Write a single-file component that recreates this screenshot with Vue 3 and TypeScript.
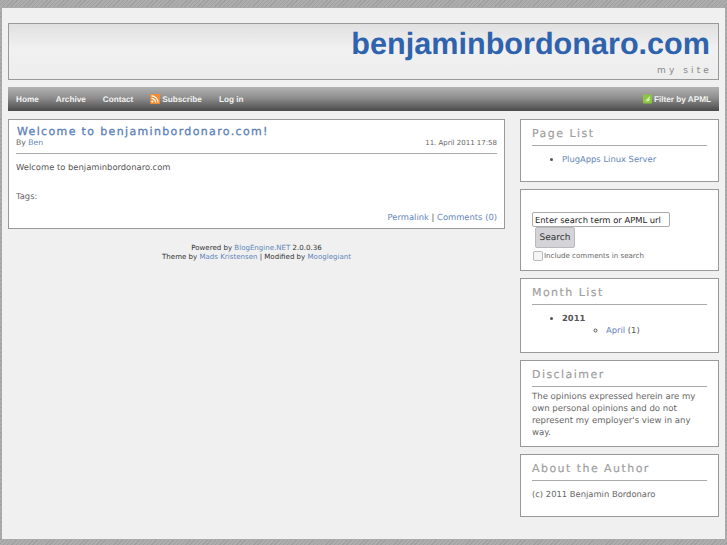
<script setup lang="ts">
const navLinks: string[] = ['Home', 'Archive', 'Contact']
</script>

<template>
  <div class="page">
    <div class="sheet">
      <header class="head">
        <div class="site-name">benjaminbordonaro.com</div>
        <div class="site-sub">my site</div>
      </header>
      <nav class="nav">
        <a v-for="l in navLinks" :key="l" class="nav-link">{{ l }}</a>
        <a class="nav-link sub">
          <svg class="ico" viewBox="0 0 10 10" width="10" height="10">
            <rect width="10" height="10" rx="1" fill="#f58a30" />
            <circle cx="2.4" cy="7.6" r="1.1" fill="#fff" />
            <path d="M1.5 4.4a4.1 4.1 0 0 1 4.1 4.1M1.5 1.9a6.6 6.6 0 0 1 6.6 6.6" fill="none" stroke="#fff" stroke-width="1.2" />
          </svg>
          Subscribe
        </a>
        <a class="nav-link">Log in</a>
        <a class="nav-link apml">
          <svg class="ico" viewBox="0 0 10 10" width="9" height="10">
            <rect width="10" height="10" rx="1.5" fill="#8cc63f" />
            <path d="M3 7.5 7.5 2.5M5 7.5 7.5 5" stroke="#e6f5c8" stroke-width="1.2" fill="none" />
          </svg>
          Filter by APML
        </a>
      </nav>
      <div class="cols">
        <main class="main">
          <article class="post">
            <h1 class="post-title">Welcome to benjaminbordonaro.com!</h1>
            <div class="post-meta">
              <span>By <a class="lnk">Ben</a></span>
              <span class="date">11. April 2011 17:58</span>
            </div>
            <p class="post-body">Welcome to benjaminbordonaro.com</p>
            <p class="post-tags">Tags:</p>
            <div class="post-foot"><a class="lnk">Permalink</a> | <a class="lnk">Comments (0)</a></div>
          </article>
          <footer class="foot">
            <div>Powered by <a class="lnk">BlogEngine.NET</a> 2.0.0.36</div>
            <div>Theme by <a class="lnk">Mads Kristensen</a> | Modified by <a class="lnk">Mooglegiant</a></div>
          </footer>
        </main>
        <aside class="side">
          <section class="box b-pages">
            <h2 class="box-title">Page List</h2>
            <ul class="list"><li><a class="lnk">PlugApps Linux Server</a></li></ul>
          </section>
          <section class="box b-search">
            <input class="search-in" type="text" value="Enter search term or APML url" />
            <button class="search-btn" type="button">Search</button>
            <label class="search-chk"><span class="chk"></span>Include comments in search</label>
          </section>
          <section class="box b-month">
            <h2 class="box-title">Month List</h2>
            <ul class="list">
              <li><b>2011</b>
                <ul class="sublist"><li><a class="lnk">April</a> (1)</li></ul>
              </li>
            </ul>
          </section>
          <section class="box b-disc">
            <h2 class="box-title">Disclaimer</h2>
            <p class="box-text">The opinions expressed herein are my own personal opinions and do not represent my employer's view in any way.</p>
          </section>
          <section class="box b-about">
            <h2 class="box-title">About the Author</h2>
            <p class="box-text about">(c) 2011 Benjamin Bordonaro</p>
          </section>
        </aside>
      </div>
    </div>
  </div>
</template>

<style>
html, body { margin: 0; padding: 0; }
</style>

<style scoped>
.page {
  width: 727px;
  height: 545px;
  box-sizing: border-box;
  padding: 7px 1px 5px;
  overflow: hidden;
  background: repeating-linear-gradient(135deg, #9f9f9f 0 1px, #adadad 1px 3px);
  font-family: "DejaVu Sans", sans-serif;
  font-size: 8.4px;
  color: #555;
  text-rendering: geometricPrecision;
}
.sheet {
  height: 100%;
  box-sizing: border-box;
  border: 1px solid #aaa;
  background: #f0f0f0;
  padding: 15px 6px 0;
}
.head {
  height: 57px;
  box-sizing: border-box;
  border: 1px solid #999;
  background: linear-gradient(#e0e0e0, #f1f1f1 45%, #ededed);
  text-align: right;
  padding: 0 8px 0 0;
}
.site-name {
  font-family: "Liberation Sans", sans-serif;
  font-weight: 700;
  font-size: 30.6px;
  line-height: 38px;
  margin-top: 1px;
  color: #2f63ae;
}
.site-sub {
  font-size: 9px;
  letter-spacing: 3.1px;
  line-height: 12px;
  margin-top: 2px;
  margin-right: -2px;
  color: #888;
}
.nav {
  margin-top: 7px;
  height: 24px;
  background: linear-gradient(#b2b2b2, #8e8e8e 45%, #4a4a4a);
  display: flex;
  align-items: center;
  padding: 0 8px 0 8px;
  font-family: "Liberation Sans", sans-serif;
  font-weight: 700;
  font-size: 8.2px;
  color: #f2f2f2;
}
.nav-link { margin-right: 17px; display: flex; align-items: center; gap: 1px; }
.apml { margin-left: auto; margin-right: 0; }
.ico { display: block; margin-right: 1px; }
.cols {
  display: flex;
  justify-content: space-between;
  margin-top: 8px;
}
.main { width: 497px; }
.post {
  height: 110px;
  box-sizing: border-box;
  border: 1px solid #999;
  background: #fff;
  padding: 5px 7px 0;
}
.post-title {
  margin: 0 0 0 1px;
  font-size: 11px;
  line-height: 14px;
  font-weight: 400;
  letter-spacing: 1.35px;
  color: #5b80b8;
  -webkit-text-stroke: 0.3px #5b80b8;
}
.post-meta {
  display: flex;
  justify-content: space-between;
  font-size: 7.7px;
  line-height: 10px;
  margin-top: -1px;
  padding: 0 0 5px;
  border-bottom: 1px solid #aaa;
  color: #666;
}
.date { font-size: 7px; }
.post-body { margin: 7px 0 0; line-height: 12px; color: #555; }
.post-tags { margin: 17px 0 0; line-height: 12px; color: #666; }
.post-foot { text-align: right; margin-top: 9px; line-height: 12px; color: #555; }
.lnk { color: #6286ba; }
.foot {
  text-align: center;
  font-size: 7.05px;
  line-height: 9px;
  margin-top: 14px;
  color: #333;
}
.side { width: 199px; display: flex; flex-direction: column; gap: 7px; }
.box {
  box-sizing: border-box;
  border: 1px solid #999;
  background: #fff;
  padding: 0 11px;
}
.b-pages { height: 63px; }
.b-search { height: 82px; padding-top: 22px; }
.b-month { height: 75px; }
.b-disc { height: 87px; }
.b-about { height: 63px; }
.box-title {
  margin: 0;
  padding-top: 6px;
  height: 26px;
  box-sizing: border-box;
  border-bottom: 1px solid #aaa;
  font-size: 11px;
  line-height: 15px;
  font-weight: 400;
  letter-spacing: 1.45px;
  color: #a0a0a0;
  -webkit-text-stroke: 0.2px #a0a0a0;
}
.list { margin: 7px 0 0; padding: 0 0 0 30px; line-height: 12px; }
.sublist { margin: 0; padding: 0 0 0 44px; line-height: 12px; list-style: circle; }
.box-text { margin: 4px 0 0; font-size: 8.55px; line-height: 12px; color: #666; }
.about { margin-top: 7px; font-size: 8.4px; }
.search-in {
  display: block;
  box-sizing: border-box;
  width: 138px;
  height: 15px;
  padding: 0 2px;
  border: 1px solid #aaa;
  border-radius: 2px;
  background: #fff;
  font-family: "DejaVu Sans", sans-serif;
  font-size: 8.4px;
  color: #222;
  outline: none;
  text-rendering: geometricPrecision;
}
.search-btn {
  display: block;
  box-sizing: border-box;
  width: 40px;
  height: 21px;
  margin: 0 0 0 3px;
  padding: 0;
  border: 1px solid #bbb;
  border-radius: 2px;
  background: #d4d4d8;
  font-family: "DejaVu Sans", sans-serif;
  font-size: 9px;
  color: #333;
  text-rendering: geometricPrecision;
}
.search-chk { display: flex; align-items: center; font-size: 7.1px; line-height: 10px; color: #666; margin-top: 3px; }
.chk {
  display: block;
  width: 10px;
  height: 10px;
  box-sizing: border-box;
  border: 1px solid #bbb;
  border-radius: 2px;
  background: #f4f4f4;
  margin: 0 1px 0 1px;
}
</style>
